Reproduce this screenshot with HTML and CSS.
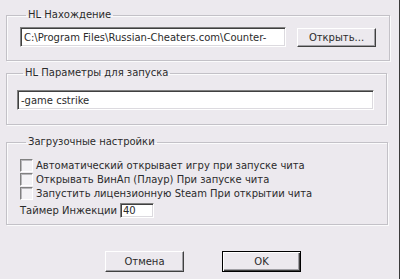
FILE: index.html
```html
<!DOCTYPE html>
<html lang="ru">
<head>
    <meta charset="UTF-8">
    <title>Настройки</title>
    <link rel="stylesheet" href="styles.css">
</head>
<body>
    <main class="dialog">
        <fieldset class="group group-path">
            <legend class="group-title">HL Нахождение</legend>
            <div class="path-row">
                <input type="text" class="field field-path" value="C:\Program Files\Russian-Cheaters.com\Counter-">
                <button type="button" class="btn btn-browse">Открыть...</button>
            </div>
        </fieldset>

        <fieldset class="group group-params">
            <legend class="group-title">HL Параметры для запуска</legend>
            <input type="text" class="field field-params" value="-game cstrike">
        </fieldset>

        <fieldset class="group group-boot">
            <legend class="group-title">Загрузочные настройки</legend>
            <label class="check-row"><span class="check-box"></span>Автоматический открывает игру при запуске чита</label>
            <label class="check-row"><span class="check-box"></span>Открывать ВинАп (Плаур) При запуске чита</label>
            <label class="check-row"><span class="check-box"></span>Запустить лицензионную Steam При открытии чита</label>
            <div class="timer-row">
                <span class="timer-label">Таймер Инжекции</span>
                <input type="text" class="field field-timer" value="40">
            </div>
        </fieldset>

        <div class="actions">
            <button type="button" class="btn btn-action">Отмена</button>
            <button type="button" class="btn btn-action btn-default">OK</button>
        </div>
    </main>
</body>
</html>
```

FILE: styles.css
```css
:root {
    --face: #ece9ee;
    --text: #2b2b2b;
    --etch: #c3c1c7;
    --shadow: #808080;
    --dark: #404040;
}

body {
    margin: 0;
    background: var(--face);
    color: var(--text);
    font-family: 'DejaVu Sans', Verdana, sans-serif;
    font-size: 10px;
}

.dialog {
    box-sizing: border-box;
    width: 400px;
    height: 279px;
    padding-left: 6px;
    border-right: 1px solid #3a3a3a;
    overflow: hidden;
}

.group {
    box-sizing: border-box;
    margin: 0;
    min-width: 0;
    border: 1px solid var(--etch);
    box-shadow: 1px 1px 0 #fbfbfc, inset 1px 1px 0 #fbfbfc;
}

.group-title {
    padding: 0 2px;
    margin-left: 6px;
    line-height: 12px;
}

.group-path {
    width: 384px;
    margin-top: 9px;
    padding: 6px 12px 13px 13px;
}

.group-params {
    width: 381px;
    margin-top: 6px;
    padding: 11px 11px 14px 10px;
}

.group-boot {
    width: 382px;
    margin-top: 11px;
    padding: 10px 12px 6px 13px;
}

.path-row {
    display: flex;
    align-items: flex-start;
    gap: 11px;
}

.field {
    box-sizing: border-box;
    margin: 0;
    padding: 0 3px;
    font: inherit;
    color: var(--text);
    background: #fff;
    border: 1px solid;
    border-color: var(--shadow) #fff #fff var(--shadow);
    box-shadow: inset 1px 1px 0 var(--dark), inset -1px -1px 0 #dcdadf;
    outline: none;
}

.field-path {
    width: 266px;
    height: 20px;
}

.field-params {
    display: block;
    width: 357px;
    height: 20px;
}

.field-timer {
    width: 34px;
    height: 15px;
    padding: 0 2px;
}

.btn {
    box-sizing: border-box;
    margin: 0;
    padding: 0;
    font: inherit;
    color: var(--text);
    background: var(--face);
    border: 1px solid;
    border-color: #fff var(--dark) var(--dark) #fff;
    box-shadow: inset -1px -1px 0 #a09fa4;
}

.btn-browse {
    width: 79px;
    height: 19px;
    margin-top: 1px;
}

.check-row {
    display: flex;
    align-items: center;
    gap: 3px;
    height: 14px;
}

.check-box {
    box-sizing: border-box;
    width: 13px;
    height: 13px;
    background: #f3f2f5;
    border: 1px solid;
    border-color: var(--shadow) #fff #fff var(--shadow);
    box-shadow: inset 1px 1px 0 #b8b7bb;
}

.timer-row {
    display: flex;
    align-items: center;
    gap: 3px;
    height: 16px;
    margin-top: 2px;
}

.actions {
    display: flex;
    gap: 38px;
    margin-top: 26px;
    padding-left: 99px;
}

.btn-action {
    width: 79px;
    height: 21px;
}

.btn-default {
    border: 1px solid #000;
    box-shadow: inset 1px 1px 0 #fff, inset -1px -1px 0 var(--dark), inset -2px -2px 0 #a09fa4;
}
```
